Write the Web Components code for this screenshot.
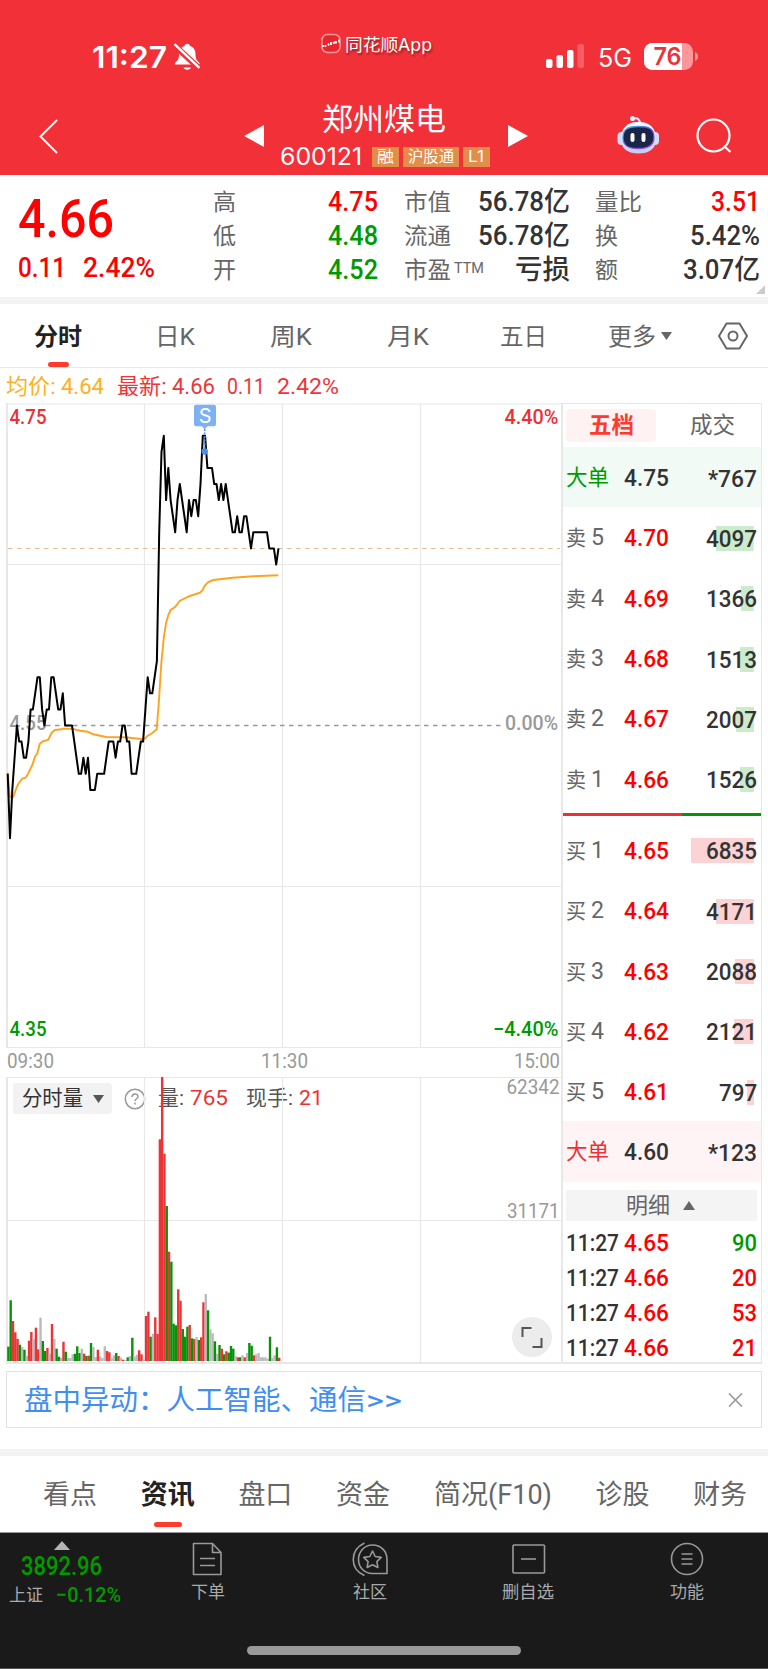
<!DOCTYPE html>
<html lang="zh-CN">
<head>
    <meta charset="utf-8">
    <title>郑州煤电 600121</title>
    <style>
        body {
            margin: 0;
            width: 768px;
            height: 1669px;
            overflow: hidden;
            background: #fff;
            font-family: Roboto, "Noto Sans CJK SC", sans-serif;
            color: #333;
            --up: #fe0000;
            --down: #009a00;
            --red: #ee3034;
            --label: #666;
            --line: #e8e8e8;
            --ui: Inter, "Noto Sans CJK SC", sans-serif;
        }
    </style>
</head>
<body>
    <status-bar></status-bar>
    <stock-header name="郑州煤电" code="600121"></stock-header>
    <quote-panel></quote-panel>
    <period-tabs></period-tabs>
    <market-view></market-view>
    <news-banner>盘中异动：人工智能、通信</news-banner>
    <info-tabs></info-tabs>
    <bottom-nav></bottom-nav>

<script>
// @ts-check

class Base extends HTMLElement {
    constructor() {
        super()
        this.attachShadow({ mode: 'open' })
        if (!this.shadowRoot) return
        this.shadowRoot.innerHTML = this.render()
    }

    render() {
        return ''
    }
}

// A single line of text squeezed or stretched to the width in "w"
class FitText extends Base {
    render() {
        return `
            <style>
                :host { display: block; flex: none; white-space: nowrap; }
                span { display: inline-block; transform-origin: 0 50%; vertical-align: top; }
            </style>
            <span><slot></slot></span>
        `
    }

    connectedCallback() {
        const width = Number(this.getAttribute('w'))
        const span = /** @type {HTMLElement} */ (this.shadowRoot?.querySelector('span'))
        const natural = span.getBoundingClientRect().width
        this.style.width = `${width}px`
        if (natural > 0) span.style.transform = `scaleX(${width / natural})`
    }
}
customElements.define('fit-text', FitText)

class StatusBar extends Base {
    render() {
        return `
            <style>
                :host {
                    display: flex;
                    height: 88px;
                    background: #f23037;
                    color: #fff;
                    font-family: var(--ui);
                    box-sizing: border-box;
                    padding: 25px 0 0 92px;
                }
                svg { display: block; flex: none; }
                .time { font-size: 30px; font-weight: 600; line-height: 65px; }
                .bell { margin: 17px 0 0 7px; }
                .logo { margin: 8px 0 0 121px; }
                .app { font-size: 17px; line-height: 40px; margin-left: 4px; text-shadow: 1px 2px 2px #0006; }
                .bars { margin: 19px 0 0 114px; }
                .net { font-size: 25px; line-height: 67px; margin-left: 13px; }
                .battery { margin: 18px 0 0 12px; }
            </style>
            <fit-text class="time" w="75">11:27</fit-text>
            <svg class="bell" width="26" height="29" viewBox="0 0 26 29" fill="#fff">
                <path d="M9.500 25.500h7.500c-1 3-6.500 3-7.500 0zM1 21c3-3 4-4 4-9 0-4 2-7 5.500-8 .5-3 5-3 5.500 0 3.500 1 5.500 4 5.500 8 0 5 1 6 4 9v1.500H1z"/>
                <path d="M0 3 26 27" stroke="#f23037" stroke-width="6"/>
                <path d="M.5 2 25.500 26" stroke="#fff" stroke-width="2.400"/>
            </svg>
            <svg class="logo" width="20" height="21" viewBox="0 0 20 21">
                <rect x="1" y="1.500" width="18" height="18" rx="5.500" fill="#e9252c" stroke="#fff8" stroke-width="1.500"/>
                <path d="M2 12v2M4.500 12v2M7 10.500l1 2M10 9v3M12 10.500l2-1.500M15 8v2.500M18 6.500v3" fill="none" stroke="#fff" stroke-width="1.800"/>
            </svg>
            <fit-text class="app" w="87">同花顺App</fit-text>
            <svg class="bars" width="39" height="25" fill="#fff">
                <rect x="0" y="15" width="6.500" height="9" rx="2"/>
                <rect x="10.500" y="11" width="6.500" height="13" rx="2"/>
                <rect x="21" y="6" width="6.500" height="18" rx="2"/>
                <rect x="31.500" y="0" width="6.500" height="24" rx="2" opacity=".22"/>
            </svg>
            <fit-text class="net" w="34">5G</fit-text>
            <svg class="battery" width="56" height="28" viewBox="0 0 56 28">
                <clipPath id="shape"><rect width="49" height="27" rx="8.500"/></clipPath>
                <g clip-path="url(#shape)">
                    <rect width="49" height="27" fill="#f9979b"/>
                    <rect width="38" height="27" fill="#fff"/>
                </g>
                <path d="M51 9c4 1 4 8 0 9z" fill="#f9979b"/>
                <text x="9.500" y="22.300" font-size="24" font-weight="600" fill="#f23037" textLength="28" lengthAdjust="spacingAndGlyphs">76</text>
            </svg>
        `
    }
}
customElements.define('status-bar', StatusBar)

class StockHeader extends Base {
    render() {
        return `
            <style>
                :host {
                    display: flex;
                    height: 87px;
                    background: #f23037;
                    color: #fff;
                    font-family: var(--ui);
                }
                svg { display: block; flex: none; }
                .back { margin: 31px 0 0 38px; }
                .prev { margin: 37px 0 0 186px; }
                .title { width: 210px; margin: 12px 18px 0 16px; }
                .name { font-size: 31px; line-height: 38px; margin-left: 42px; }
                .row { display: flex; gap: 4px; margin-top: 8px; height: 21px; align-items: center; }
                .code { font-size: 24px; line-height: 22px; margin-right: 6px; }
                .badge { background: #e28d49; height: 20px; padding: 0 5px; font-size: 15.5px; line-height: 20px; }
                .badge:last-child { padding: 0 6px 0 5px; }
                .next { margin: 37px 0 0 0; }
                .robot { margin: 27px 0 0 89px; }
                .search { margin: 30px 0 0 36px; }
            </style>
            <svg class="back" width="20" height="36" fill="none" stroke="#fff" stroke-width="2">
                <path d="M19 1 2.500 17.500 19 34"/>
            </svg>
            <svg class="prev" width="20" height="22" fill="#fff"><path d="M0 11 20 0V22z"/></svg>
            <div class="title">
                <fit-text class="name" w="124">${this.getAttribute('name')}</fit-text>
                <div class="row">
                    <fit-text class="code" w="82">${this.getAttribute('code')}</fit-text>
                    <div class="badge"><fit-text w="17">融</fit-text></div>
                    <div class="badge"><fit-text w="46">沪股通</fit-text></div>
                    <div class="badge"><fit-text w="16">L1</fit-text></div>
                </div>
            </div>
            <svg class="next" width="20" height="22" fill="#fff"><path d="M20 11 0 0V22z"/></svg>
            <svg class="robot" width="43" height="41" viewBox="0 0 43 41">
                <defs>
                    <linearGradient id="head" x2="0" y2="1">
                        <stop stop-color="#fff"/><stop offset="1" stop-color="#c3cdf3"/>
                    </linearGradient>
                    <linearGradient id="rim" y2="1">
                        <stop stop-color="#3fd0e6"/><stop offset=".5" stop-color="#5b48e8"/><stop offset="1" stop-color="#b34ee0"/>
                    </linearGradient>
                </defs>
                <path d="M16 4c5-2 7 1 7 5" fill="none" stroke="#e4e6fb" stroke-width="2"/>
                <circle cx="15.500" cy="3.500" r="2.500" fill="#e9ecff"/>
                <rect x=".5" y="17" width="8" height="13" rx="4" fill="#d3dafa"/>
                <rect x="34" y="17" width="8" height="13" rx="4" fill="#d3dafa"/>
                <path d="M21.500 7C33 7 39 13 39 24c0 10-7 14.500-17.500 14.500S4 34 4 24C4 13 10 7 21.500 7z" fill="url(#head)"/>
                <path d="M21.500 11.500C32 11.500 37 14 37 22.500S31 33.500 21.500 33.500 6 31 6 22.500 11 11.500 21.500 11.500z" fill="#1b2547" stroke="url(#rim)" stroke-width="1.300"/>
                <rect x="13.500" y="18" width="4" height="9" rx="2" fill="#fff"/>
                <rect x="24.500" y="18" width="4" height="9" rx="2" fill="#fff"/>
            </svg>
            <svg class="search" width="36" height="37" fill="none" stroke="#fff" stroke-width="2.200">
                <circle cx="17.500" cy="17.500" r="16"/><path d="m28 28 6.500 6"/>
            </svg>
        `
    }
}
customElements.define('stock-header', StockHeader)

class QuotePanel extends Base {
    render() {
        return `
            <style>
                :host {
                    display: flex;
                    position: relative;
                    height: 122px;
                    border-bottom: 7px solid #f4f4f4;
                    font-weight: 500;
                }
                .last { width: 195px; padding: 14px 0 0 18px; box-sizing: border-box; color: var(--up); }
                .price { font-size: 54px; line-height: 60px; }
                .change { display: flex; gap: 17px; font-size: 28px; line-height: 36px; margin-top: 1px; }
                .col { display: grid; grid-template-rows: repeat(3, 34px); padding-top: 10px; }
                .col div { display: flex; justify-content: space-between; line-height: 34px; font-size: 27px; }
                .a { width: 165px; margin-left: 18px; }
                .b { width: 166px; margin-left: 26px; }
                .c { width: 165px; margin-left: 25px; }
                .col .l { font-size: 23px; font-weight: 400; line-height: 36px; color: var(--label); }
                .ttm { font-size: 14px; font-weight: 400; line-height: 30px; color: var(--label); margin: 0 auto 0 3px; }
                .up { color: var(--up); }
                .down { color: var(--down); }
                .more { position: absolute; right: 3px; bottom: 3px; }
            </style>
            <div class="last">
                <fit-text class="price" w="96">4.66</fit-text>
                <div class="change"><fit-text w="48">0.11</fit-text><fit-text w="72">2.42%</fit-text></div>
            </div>
            <div class="col a">
                <div><fit-text class="l" w="23">高</fit-text><fit-text class="up" w="50">4.75</fit-text></div>
                <div><fit-text class="l" w="23">低</fit-text><fit-text class="down" w="50">4.48</fit-text></div>
                <div><fit-text class="l" w="23">开</fit-text><fit-text class="down" w="50">4.52</fit-text></div>
            </div>
            <div class="col b">
                <div><fit-text class="l" w="47">市值</fit-text><fit-text w="92">56.78亿</fit-text></div>
                <div><fit-text class="l" w="47">流通</fit-text><fit-text w="92">56.78亿</fit-text></div>
                <div><fit-text class="l" w="47">市盈</fit-text><fit-text class="ttm" w="30">TTM</fit-text><fit-text w="55">亏损</fit-text></div>
            </div>
            <div class="col c">
                <div><fit-text class="l" w="47">量比</fit-text><fit-text class="up" w="49">3.51</fit-text></div>
                <div><fit-text class="l" w="23">换</fit-text><fit-text w="70">5.42%</fit-text></div>
                <div><fit-text class="l" w="23">额</fit-text><fit-text w="77">3.07亿</fit-text></div>
            </div>
            <svg class="more" width="9" height="9" fill="#ccc"><path d="M9 0v9H0z"/></svg>
        `
    }
}
customElements.define('quote-panel', QuotePanel)

class PeriodTabs extends Base {
    render() {
        return `
            <style>
                :host {
                    display: flex;
                    gap: 74px;
                    height: 63px;
                    padding-left: 34px;
                    border-bottom: 1px solid #e9e9e9;
                    font-size: 23.5px;
                    line-height: 66px;
                    color: var(--label);
                }
                .on { position: relative; color: #222; font-weight: 700; }
                .on::after {
                    content: "";
                    position: absolute;
                    left: 14px;
                    bottom: 0;
                    width: 21px;
                    height: 5px;
                    border-radius: 2.5px;
                    background: #ff3b30;
                }
                .more { display: flex; margin-left: -13px; }
                .more svg { margin: 28px 0 0 5px; }
                .gear { margin: 18px 0 0 -28px; }
            </style>
            <fit-text class="on" w="48">分时</fit-text>
            <fit-text w="40" style="margin-left: -1px">日K</fit-text>
            <fit-text w="42" style="margin-left: 1px">周K</fit-text>
            <fit-text w="42" style="margin-left: 1px">月K</fit-text>
            <fit-text w="47" style="margin-left: -3px">五日</fit-text>
            <div class="more">
                <fit-text w="48">更多</fit-text>
                <svg width="11" height="8" fill="#666"><path d="M0 0h11L5.500 8z"/></svg>
            </div>
            <svg class="gear" width="31" height="28" fill="none" stroke="#666" stroke-width="2">
                <path d="M8.500 1.500h13L29 14l-7.500 12.500h-13L1 14z" stroke-linejoin="round"/>
                <circle cx="15" cy="14" r="4.500"/>
            </svg>
        `
    }
}
customElements.define('period-tabs', PeriodTabs)

// x of the first minute and the distance between two minutes
const X0 = 7.7
const STEP = 2.295

// Ticks (0.01) above or below yesterday's close, one for each minute
const PRICES = [
    -3, -7, -4, -2, 0, -1, -1, -2, -2, -1, 1, 1, 2, 3, 3, 1, 0, 1, 1, 3,
    3, 2, 1, 1, 2, 0, 0, 0, 0, -1, -2, -3, -3, -2, -3, -2, -4, -4, -4, -3,
    -3, -3, -3, -2, -1, -1, -1, -2, -1, -1, 0, 0, -1, -1, -3, -3, -3, -2, -1, -1,
    1, 3, 2, 2, 3, 4, 12, 17, 18, 14, 16, 14, 13, 12, 14, 15, 14, 13, 12, 14,
    13, 14, 14, 13, 15, 18, 18, 16, 16, 16, 15, 15, 14, 15, 14, 15, 14, 13, 12, 12,
    13, 12, 12, 13, 13, 12, 11, 12, 12, 12, 12, 12, 12, 12, 11, 11, 11, 10, 11,
]

const AVERAGE = '7.700,772.700 9.700,796.700 13.300,796.700 16.700,787.300 19,782.700 22.300,778.700 25.700,777.700 28,774 32.300,765 35,756.700 37.300,753.300 39.700,744 42.300,741.700 48.300,739.700 51.700,732.700 55,730 61.700,729.300 63.300,728.700 71.700,728.700 80,730.700 87.700,731.700 93.300,734.300 106,737 125,737.300 143.300,739.300 145.300,738.300 147.700,735.700 152,733.300 156.700,729.300 159,700 161.300,663.300 163.700,638.300 166,623.300 168.300,615 170.700,610 175,607 180,600.700 190,596 200,592.700 202.700,590 205,585.300 208.300,582 213.300,580 232.700,577.700 253.300,576.300 278.300,575.300'

// Colour (r up, g down, n flat) and height in thirds of a pixel
const VOLUMES = `
    g43 g182 r120 r86 r66 g49 n42 g34 n15 r61 r87 n66 r100 r35 n130 g60 g30 r39 n22 r111
    n66 g37 g13 n10 r58 g28 n9 n9 n20 g22 g44 g24 n37 r22 g15 r16 g54 n42 n12 r34
    n14 n9 n44 r30 r26 n10 n17 g24 r15 n10 r4 n3 g11 n15 g70 n13 n19 r32 r20 n4
    r135 r148 g73 n82 r131 r81 r665 r852 r622 g465 r328 g298 g112 g107 r215 r181 g96 g73 g103 r108
    g68 r66 n72 g63 r71 r176 n201 g152 n95 n83 g59 n22 g48 r37 g20 r29 g25 g45 g37 n15
    r11 g11 n17 r11 n24 g54 g46 r17 n20 n24 n11 n11 n11 n7 g73 n10 n17 g41 r10
`.trim().split(/\s+/)

class PriceChart extends Base {
    render() {
        const points = PRICES
            .map((tick, i) => `${(X0 + i * STEP).toFixed(1)},${(725.5 - tick * 16.1).toFixed(1)}`)
            .join(' ')

        return `
            <style>
                :host { display: block; }
                svg { display: block; overflow: visible; }
                text { font-size: 20px; font-weight: 500; }
            </style>
            <svg width="555" height="645" viewBox="6 403 555 645" fill="none">
                <g stroke="#e8e8e8" stroke-width="1.200">
                    <path d="M7 404H561M7 564.500H561M7 886.500H561M7 1047.500H561M144.500 404V1047M282.500 404V1047M420.500 404V1047"/>
                    <path d="M7 403V1048" stroke-width="2"/>
                </g>
                <path d="M8 548.500H560" stroke="#e0bd94" stroke-width="1.200" stroke-dasharray="4.500 4.500"/>
                <path d="M46 725.500H505" stroke="#999" stroke-width="1.300" stroke-dasharray="4.500 4.500"/>
                <text x="9.500" y="423.700" fill="#ee3034" textLength="37" lengthAdjust="spacingAndGlyphs">4.75</text>
                <text x="504.500" y="423.700" fill="#ee3034" textLength="54" lengthAdjust="spacingAndGlyphs">4.40%</text>
                <text x="9.500" y="729.500" fill="#999" textLength="37" lengthAdjust="spacingAndGlyphs">4.55</text>
                <text x="505" y="729.500" fill="#999" textLength="53" lengthAdjust="spacingAndGlyphs">0.00%</text>
                <text x="9.500" y="1035.500" fill="#009a00" textLength="37" lengthAdjust="spacingAndGlyphs">4.35</text>
                <text x="493" y="1035.500" fill="#009a00" textLength="65.500" lengthAdjust="spacingAndGlyphs">−4.40%</text>
                <polyline points="${AVERAGE}" stroke="#ffa31f" stroke-width="1.900"/>
                <polyline points="${points}" stroke="#000" stroke-width="2" stroke-linejoin="round"/>
                <path d="M196 404.800h18q2 0 2 2v17.500q0 2-2 2h-6.500l-2.800 3-2.800-3H196q-2 0-2-2V406.800q0-2 2-2z" fill="#7eb1f3"/>
                <path d="M204.700 429v21" stroke="#4f97f0" stroke-width="1.600" stroke-dasharray="2 1.500"/>
                <circle cx="204.700" cy="451.500" r="3.200" fill="#468fee"/>
                <text x="198.700" y="422.500" fill="#fff" font-family="Inter" style="font-weight: 400" textLength="12">S</text>
            </svg>
        `
    }
}
customElements.define('price-chart', PriceChart)

class VolumeChart extends Base {
    render() {
        const colors = { r: '#ec3335', g: '#079307', n: '#bbb' }
        const bars = VOLUMES.map((bar, i) => {
            const height = Number(bar.slice(1)) / 3
            const x = (X0 - 0.5 + i * STEP).toFixed(2)
            return `<rect x="${x}" y="${(1361 - height).toFixed(1)}" width="2.400" height="${height.toFixed(1)}" fill="${colors[bar[0]]}"/>`
        }).join('')

        return `
            <style>
                :host { display: block; position: relative; height: 287px; }
                .plot { display: block; position: relative; z-index: 1; overflow: visible; }
                .head {
                    position: absolute;
                    top: 6px;
                    left: 7px;
                    display: flex;
                    align-items: center;
                    height: 31px;
                    font-size: 21px;
                    line-height: 33px;
                    color: #555;
                }
                .head svg { flex: none; }
                .pick {
                    display: flex;
                    flex: none;
                    align-items: center;
                    gap: 10px;
                    box-sizing: border-box;
                    width: 99px;
                    height: 31px;
                    padding-left: 9px;
                    background: #f2f2f2;
                    border-radius: 3px;
                    color: #333;
                }
                .help { margin: 0 12px; }
                .num { color: var(--red); }
                .full { position: absolute; z-index: 2; left: 506px; bottom: 7px; }
                text { font-size: 20px; }
            </style>
            <div class="head">
                <div class="pick">
                    <fit-text w="61">分时量</fit-text>
                    <svg width="11" height="8" fill="#555"><path d="M0 0h11L5.500 8z"/></svg>
                </div>
                <svg class="help" width="22" height="22" fill="none" stroke="#999" stroke-width="1.500">
                    <circle cx="11" cy="11" r="9.700"/>
                    <path d="M8 9c0-4 6-4 6-.5 0 2-3 2.500-3 4.500M11 14.500v2"/>
                </svg>
                <fit-text w="26">量:</fit-text>
                <fit-text class="num" w="38" style="margin-left: 6px">765</fit-text>
                <fit-text w="47" style="margin-left: 18px">现手:</fit-text>
                <fit-text class="num" w="24" style="margin-left: 6px">21</fit-text>
            </div>
            <svg class="plot" width="555" height="287" viewBox="6 1077 555 287" fill="none">
                <path d="M7 1077.500H561M7 1220.500H561M144.500 1077V1363M282.500 1077V1363M420.500 1077V1363" stroke="#e8e8e8" stroke-width="1.200"/>
                <path d="M7 1077V1363H561" stroke="#e8e8e8" stroke-width="2"/>
                <text x="506.500" y="1093.500" fill="#999" textLength="53" lengthAdjust="spacingAndGlyphs">62342</text>
                <text x="507" y="1217.700" fill="#999" textLength="52.500" lengthAdjust="spacingAndGlyphs">31171</text>
                ${bars}
            </svg>
            <svg class="full" width="40" height="40" fill="none" stroke="#555" stroke-width="2">
                <circle cx="20" cy="20" r="20" fill="#ececec" stroke="none"/>
                <path d="M10.500 20v-9h9M29.500 21v9h-9"/>
            </svg>
        `
    }
}
customElements.define('volume-chart', VolumeChart)

class BookRow extends Base {
    render() {
        const side = this.getAttribute('side')
        const big = this.hasAttribute('big')
        const qty = this.getAttribute('qty') || ''
        const tint = side == 'sell' ? '#cbebcc' : '#fbd3d5'
        const bar = big ? 0 : Number(qty) / 6835 * 63
        const label = big
            ? '<fit-text class="big" w="43">大单</fit-text>'
            : `<fit-text w="20">${side == 'sell' ? '卖' : '买'}</fit-text><fit-text class="level" w="13">${this.getAttribute('level')}</fit-text>`

        return `
            <style>
                :host {
                    display: flex;
                    align-items: center;
                    box-sizing: border-box;
                    height: 60.3px;
                    padding: 2px 4px 0 2.5px;
                    line-height: 30px;
                    font-size: 24.5px;
                    font-weight: 500;
                    background: ${big ? (side == 'sell' ? '#f1faf5' : '#fef4f5') : 'none'};
                }
                .label { display: flex; width: 58.500px; font-size: 21px; font-weight: 400; color: var(--label); }
                .level { margin-left: 5px; font-size: 23px; }
                .big { font-size: 22px; color: ${side == 'sell' ? 'var(--down)' : 'var(--red)'}; }
                .price { color: ${big ? '#333' : 'var(--up)'}; }
                .qty {
                    margin-left: auto;
                    min-width: 66px;
                    display: flex;
                    justify-content: flex-end;
                    line-height: 25px;
                    background: linear-gradient(${tint}, ${tint}) no-repeat right 3px top 0 / ${bar}px 100%;
                }
            </style>
            <div class="label">${label}</div>
            <fit-text class="price" w="45">${this.getAttribute('price')}</fit-text>
            <div class="qty"><fit-text w="${big ? 49 : qty.length * 12.75}">${qty}</fit-text></div>
        `
    }
}
customElements.define('book-row', BookRow)

class OrderBook extends Base {
    render() {
        const sells = [['5', '4.70', 4097], ['4', '4.69', 1366], ['3', '4.68', 1513], ['2', '4.67', 2007], ['1', '4.66', 1526]]
        const buys = [['1', '4.65', 6835], ['2', '4.64', 4171], ['3', '4.63', 2088], ['4', '4.62', 2121], ['5', '4.61', 797]]
        const trades = [['4.65', '90', 'down'], ['4.66', '20', 'up'], ['4.66', '53', 'up'], ['4.66', '21', 'up']]
        const row = (side, [level, price, qty]) =>
            `<book-row side="${side}" level="${level}" price="${price}" qty="${qty}"></book-row>`

        return `
            <style>
                :host {
                    display: block;
                    box-sizing: border-box;
                    width: 201px;
                    height: 961px;
                    border: 1px solid var(--line);
                    border-left-width: 2px;
                    border-bottom-width: 2px;
                }
                .tabs { display: flex; height: 43px; line-height: 33px; font-size: 22.5px; color: var(--label); }
                .tabs .on {
                    flex: none;
                    width: 67px;
                    height: 33px;
                    margin: 5px 34px 0 3px;
                    padding-left: 23px;
                    border-radius: 4px;
                    background: #fef3f2;
                    color: #fb3a30;
                    font-weight: 700;
                }
                .tabs > fit-text { margin-top: 5px; }
                .split { height: 3px; margin: 4px 0; background: linear-gradient(90deg, var(--red) 60%, #079307 60%); }
                .detail {
                    display: flex;
                    align-items: center;
                    height: 31px;
                    margin: 8px 4px 4px 3px;
                    padding-left: 60px;
                    background: #f4f4f4;
                    font-size: 22px;
                    line-height: 31px;
                    color: var(--label);
                }
                .detail svg { margin-left: 13px; }
                .trade { display: flex; height: 35px; padding: 0 4px 0 3px; font-size: 24.5px; font-weight: 500; line-height: 35px; }
                .trade :nth-child(2) { margin-left: 5px; color: var(--up); }
                .trade :last-child { margin-left: auto; }
                .up { color: var(--up); }
                .down { color: var(--down); }
            </style>
            <div class="tabs">
                <div class="on"><fit-text w="45">五档</fit-text></div>
                <fit-text w="45">成交</fit-text>
            </div>
            <book-row big side="sell" price="4.75" qty="*767"></book-row>
            ${sells.map(item => row('sell', item)).join('')}
            <div class="split"></div>
            ${buys.map(item => row('buy', item)).join('')}
            <book-row big side="buy" price="4.60" qty="*123"></book-row>
            <div class="detail">
                <fit-text w="44">明细</fit-text>
                <svg width="12" height="9" fill="#666"><path d="M0 9 6 0l6 9z"/></svg>
            </div>
            ${trades.map(([price, qty, dir]) => `
                <div class="trade">
                    <fit-text w="53">11:27</fit-text>
                    <fit-text w="45">${price}</fit-text>
                    <fit-text class="${dir}" w="25">${qty}</fit-text>
                </div>
            `).join('')}
        `
    }
}
customElements.define('order-book', OrderBook)

class MarketView extends Base {
    render() {
        return `
            <style>
                :host { display: block; height: 1003px; }
                .legend { display: flex; height: 35px; padding-left: 6px; font-size: 21.5px; line-height: 37px; color: #ee3538; }
                .avg { color: #ffb01f; margin-right: 13px; }
                .main { display: flex; padding-left: 6px; }
                .times { display: flex; justify-content: space-between; height: 29px; padding: 0 1px; font-size: 21px; line-height: 27px; color: #999; }
            </style>
            <div class="legend">
                <fit-text class="avg" w="98">均价: 4.64</fit-text>
                <fit-text w="98">最新: 4.66</fit-text>
                <fit-text w="38" style="margin-left: 12px">0.11</fit-text>
                <fit-text w="62" style="margin-left: 12px">2.42%</fit-text>
            </div>
            <div class="main">
                <div>
                    <price-chart></price-chart>
                    <div class="times"><fit-text w="47">09:30</fit-text><fit-text w="47">11:30</fit-text><fit-text w="46">15:00</fit-text></div>
                    <volume-chart></volume-chart>
                </div>
                <order-book></order-book>
            </div>
        `
    }
}
customElements.define('market-view', MarketView)

class NewsBanner extends Base {
    render() {
        return `
            <style>
                :host {
                    display: flex;
                    box-sizing: border-box;
                    height: 57px;
                    margin: 0 6px 21px;
                    padding: 0 18px 0 17px;
                    border: 1.5px solid #e2e2e2;
                    font-size: 28px;
                    line-height: 57px;
                    color: #3f8ff2;
                }
                svg { margin: 21px 0 0 auto; }
            </style>
            <fit-text w="342"><slot></slot></fit-text>
            <fit-text w="36">&gt;&gt;</fit-text>
            <svg width="15" height="14" stroke="#999" stroke-width="1.600"><path d="M1 .5 14 13.500M14 .5 1 13.500"/></svg>
        `
    }
}
customElements.define('news-banner', NewsBanner)

class InfoTabs extends Base {
    render() {
        return `
            <style>
                :host {
                    display: flex;
                    box-sizing: border-box;
                    height: 83px;
                    gap: 43.7px;
                    padding-left: 43px;
                    border-top: 7px solid #f4f4f4;
                    font-size: 27px;
                    line-height: 79px;
                    color: var(--label);
                }
                .on { position: relative; color: #222; font-weight: 700; }
                .on::after {
                    content: "";
                    position: absolute;
                    left: 13px;
                    top: 66px;
                    width: 28px;
                    height: 5px;
                    border-radius: 2.5px;
                    background: #ff3b30;
                }
            </style>
            <fit-text w="54">看点</fit-text>
            <fit-text class="on" w="54">资讯</fit-text>
            <fit-text w="54">盘口</fit-text>
            <fit-text w="54">资金</fit-text>
            <fit-text w="118">简况(F10)</fit-text>
            <fit-text w="54">诊股</fit-text>
            <fit-text w="54">财务</fit-text>
        `
    }
}
customElements.define('info-tabs', InfoTabs)

class BottomNav extends Base {
    render() {
        return `
            <style>
                :host {
                    display: block;
                    box-sizing: border-box;
                    height: 137px;
                    border-top: 1px solid #999;
                    border-bottom: 1px solid #555;
                    background: #1a1a1a;
                    color: #aaa;
                    font-size: 17px;
                }
                .row { display: flex; height: 113px; }
                .index { width: 112px; padding: 8px 0 0 9px; color: var(--down); font-weight: 500; }
                .index svg { display: block; margin-left: 45px; }
                .value { font-size: 25px; line-height: 34px; margin-left: 12px; }
                .sub { display: flex; font-size: 21px; line-height: 22px; }
                .sub :first-child { font-size: 17px; font-weight: 400; color: #aaa; line-height: 23px; margin-right: 13px; }
                .item { display: flex; flex-direction: column; align-items: center; padding-top: 9px; width: 80px; }
                .item svg { display: block; height: 34px; }
                .item fit-text { line-height: 24px; margin-top: 4px; }
                .home { width: 274px; height: 9px; border-radius: 5px; margin: 0 auto 0 247px; background: #999; }
            </style>
            <div class="row">
                <div class="index">
                    <svg width="16" height="9" fill="#b5b5b5"><path d="M0 9 8 0l8 9z"/></svg>
                    <fit-text class="value" w="81">3892.96</fit-text>
                    <div class="sub"><fit-text w="34">上证</fit-text><fit-text w="65">−0.12%</fit-text></div>
                </div>
                <div class="item" style="margin-left: 47px">
                    <svg width="32" viewBox="0 0 32 34" fill="none" stroke="#999" stroke-width="1.600" stroke-linejoin="round">
                        <path d="M1.500 1.500h19l8.500 9v22H1.500zM20.500 1.500v9H29M8 16.500h15M8 23.500h15"/>
                    </svg>
                    <fit-text w="34">下单</fit-text>
                </div>
                <div class="item" style="margin-left: 82px">
                    <svg width="37" viewBox="0 0 37 34" fill="none" stroke="#999" stroke-width="1.600" stroke-linejoin="round">
                        <path d="M35 31.500H20.500C12 31.500 6.500 25 6.500 17.500S12 3 20.500 3 35 9 35 17.500zM12.500 1C-2.500 8-2.500 27 12.500 33.500"/>
                        <path d="m20.500 9 2.700 5.500 6 .9-4.300 4.200 1 5.900-5.400-2.800-5.400 2.800 1-5.900-4.300-4.200 6-.9z"/>
                    </svg>
                    <fit-text w="34">社区</fit-text>
                </div>
                <div class="item" style="margin-left: 78px">
                    <svg width="36" viewBox="0 0 36 34" fill="none" stroke="#999" stroke-width="1.600">
                        <rect x="3" y="3" width="31.500" height="28" rx="1"/><path d="M11 17h15"/>
                    </svg>
                    <fit-text w="52">删自选</fit-text>
                </div>
                <div class="item" style="margin-left: 79px">
                    <svg width="34" viewBox="0 0 34 34" fill="none" stroke="#999" stroke-width="1.600">
                        <circle cx="17" cy="17" r="15.500"/><path d="M11.500 12h11M11.500 17h11M11.500 22h11"/>
                    </svg>
                    <fit-text w="34">功能</fit-text>
                </div>
            </div>
            <div class="home"></div>
        `
    }
}
customElements.define('bottom-nav', BottomNav)
</script>
</body>
</html>
